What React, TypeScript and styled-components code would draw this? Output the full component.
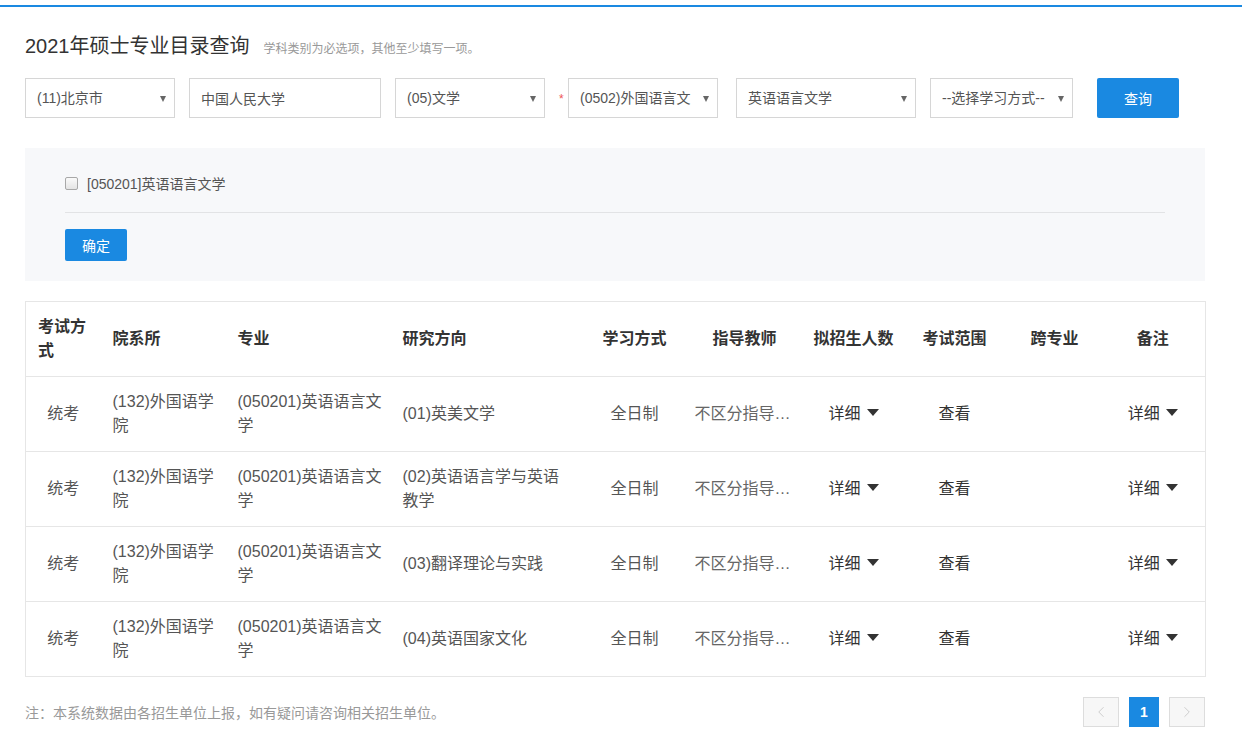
import styled, { createGlobalStyle } from "styled-components";
import { ChevronLeft, ChevronRight } from "lucide-react";

const GlobalStyle = createGlobalStyle`
  * { box-sizing: border-box; }
  body {
    margin: 0;
    background: #fff;
    font-family: "Liberation Sans", "Noto Sans CJK SC", sans-serif;
    color: #555;
  }
`;

const BLUE = "#1a89e1";

const Page = styled.div`
  padding-top: 5px;
`;
const TopLine = styled.div`
  height: 2px;
  background: ${BLUE};
`;
const Container = styled.div`
  width: 1180px;
  margin-left: 25px;
`;
const TitleRow = styled.div`
  display: flex;
  align-items: baseline;
  margin-top: 26px;
  height: 26px;
`;
const Title = styled.h1`
  margin: 0;
  font-size: 20px;
  font-weight: normal;
  color: #333;
  line-height: 26px;
`;
const Hint = styled.span`
  margin-left: 14px;
  font-size: 12px;
  color: #999;
`;
const FilterRow = styled.div`
  display: flex;
  align-items: center;
  gap: 14px;
  margin-top: 19px;
  height: 40px;
`;
const Select = styled.div<{ $w: number }>`
  position: relative;
  width: ${(p) => p.$w}px;
  height: 40px;
  border: 1px solid #d6d6d6;
  padding: 0 24px 0 11px;
  display: flex;
  align-items: center;
  font-size: 14px;
  color: #555;
  &::after {
    content: "";
    position: absolute;
    right: 8px;
    top: 17px;
    border-left: 3.5px solid transparent;
    border-right: 3.5px solid transparent;
    border-top: 6px solid #666;
  }
`;
/* the option text wraps whole characters out of sight, like a native select */
const SelectText = styled.span`
  display: block;
  height: 20px;
  line-height: 20px;
  overflow: hidden;
  word-break: break-all;
`;
const Input = styled.div<{ $w: number }>`
  width: ${(p) => p.$w}px;
  height: 40px;
  border: 1px solid #d6d6d6;
  padding: 0 11px;
  display: flex;
  align-items: center;
  font-size: 14px;
  color: #555;
`;
const Required = styled.div`
  display: flex;
  align-items: center;
  margin-right: 4px;
`;
const Star = styled.span`
  width: 9px;
  color: #e55;
  font-size: 12px;
  margin-top: 2px;
`;
const Button = styled.button<{ $w: number; $h: number }>`
  width: ${(p) => p.$w}px;
  height: ${(p) => p.$h}px;
  background: ${BLUE};
  color: #fff;
  border: 0;
  border-radius: 2px;
  font-family: inherit;
  font-size: 14px;
  cursor: pointer;
`;
const SearchButton = styled(Button)`
  margin-left: 10px;
`;
const Panel = styled.div`
  margin-top: 30px;
  background: #f7f8fa;
  padding: 20px 40px 20px;
`;
const CheckRow = styled.div`
  display: flex;
  align-items: center;
  height: 32px;
  font-size: 14px;
  color: #555;
  margin-top: -1px;
`;
const CheckBox = styled.span`
  width: 13px;
  height: 13px;
  border: 1px solid #a8a8a8;
  border-radius: 2px;
  background: linear-gradient(#fafafa, #e4e4e4);
  margin-right: 9px;
`;
const Divider = styled.div`
  height: 1px;
  background: #e2e3e5;
  margin: 13px 0 16px;
`;
const Table = styled.table`
  margin-top: 20px;
  width: 1180px;
  table-layout: fixed;
  border-collapse: collapse;
  border: 1px solid #e6e6e6;
  font-size: 16px;
  line-height: 24px;

  th:nth-child(4),
  td:nth-child(4) {
    padding-right: 20px;
  }
`;
const Th = styled.th<{ $center?: boolean }>`
  height: 75px;
  padding: ${(p) => (p.$center ? "0 6px" : "0 6px 0 12px")};
  text-align: ${(p) => (p.$center ? "center" : "left")};
  font-weight: bold;
  color: #333;
  border-bottom: 1px solid #e6e6e6;
`;
const Td = styled.td<{ $center?: boolean; $dark?: boolean }>`
  height: 75px;
  padding: ${(p) => (p.$center ? "0 6px" : "0 6px 0 12px")};
  text-align: ${(p) => (p.$center ? "center" : "left")};
  color: ${(p) => (p.$dark ? "#333" : "#555")};
  border-bottom: 1px solid #e6e6e6;
`;
const Ellipsis = styled(Td)`
  white-space: nowrap;
  overflow: hidden;
  text-overflow: ellipsis;
  color: #666;
`;
const Caret = styled.span`
  display: inline-block;
  margin-left: 6px;
  vertical-align: middle;
  border-left: 6px solid transparent;
  border-right: 6px solid transparent;
  border-top: 7px solid #333;
  position: relative;
  top: -2px;
`;
const Footer = styled.div`
  display: flex;
  align-items: center;
  justify-content: space-between;
  margin-top: 20px;
  height: 30px;
`;
const Note = styled.span`
  font-size: 14px;
  color: #999;
`;
const Pager = styled.div`
  display: flex;
  gap: 10px;
`;
const PageArrow = styled.span`
  width: 36px;
  height: 30px;
  border: 1px solid #ddd;
  background: #f7f7f7;
  display: flex;
  align-items: center;
  justify-content: center;
  color: #c8c8c8;
`;
const PageNum = styled.span`
  width: 30px;
  height: 30px;
  background: ${BLUE};
  color: #fff;
  font-size: 14px;
  font-weight: bold;
  display: flex;
  align-items: center;
  justify-content: center;
`;

const widths = [75, 125, 165, 196, 96, 124, 94, 108, 92, 105];
const rows = [
  "(01)英美文学",
  "(02)英语语言学与英语教学",
  "(03)翻译理论与实践",
  "(04)英语国家文化",
];

export default function App() {
  return (
    <Page>
      <GlobalStyle />
      <TopLine />
      <Container>
        <TitleRow>
          <Title>2021年硕士专业目录查询</Title>
          <Hint>学科类别为必选项，其他至少填写一项。</Hint>
        </TitleRow>
        <FilterRow>
          <Select $w={150}>
            <SelectText>(11)北京市</SelectText>
          </Select>
          <Input $w={192}>中国人民大学</Input>
          <Select $w={150}>
            <SelectText>(05)文学</SelectText>
          </Select>
          <Required>
            <Star>*</Star>
            <Select $w={150}>
              <SelectText>(0502)外国语言文学</SelectText>
            </Select>
          </Required>
          <Select $w={180}>
            <SelectText>英语语言文学</SelectText>
          </Select>
          <Select $w={143}>
            <SelectText>--选择学习方式--</SelectText>
          </Select>
          <SearchButton $w={82} $h={40}>查询</SearchButton>
        </FilterRow>
        <Panel>
          <CheckRow>
            <CheckBox />
            [050201]英语语言文学
          </CheckRow>
          <Divider />
          <Button $w={62} $h={32}>确定</Button>
        </Panel>
        <Table>
          <colgroup>
            {widths.map((w, i) => (
              <col key={i} style={{ width: w }} />
            ))}
          </colgroup>
          <thead>
            <tr>
              <Th>考试方式</Th>
              <Th>院系所</Th>
              <Th>专业</Th>
              <Th>研究方向</Th>
              <Th $center>学习方式</Th>
              <Th $center>指导教师</Th>
              <Th $center>拟招生人数</Th>
              <Th $center>考试范围</Th>
              <Th $center>跨专业</Th>
              <Th $center>备注</Th>
            </tr>
          </thead>
          <tbody>
            {rows.map((r) => (
              <tr key={r}>
                <Td $center>统考</Td>
                <Td>(132)外国语学院</Td>
                <Td>(050201)英语语言文学</Td>
                <Td>{r}</Td>
                <Td $center>全日制</Td>
                <Ellipsis>不区分指导教师</Ellipsis>
                <Td $center $dark>
                  详细<Caret />
                </Td>
                <Td $center $dark>查看</Td>
                <Td $center></Td>
                <Td $center $dark>
                  详细<Caret />
                </Td>
              </tr>
            ))}
          </tbody>
        </Table>
        <Footer>
          <Note>注：本系统数据由各招生单位上报，如有疑问请咨询相关招生单位。</Note>
          <Pager>
            <PageArrow>
              <ChevronLeft size={18} strokeWidth={1.2} />
            </PageArrow>
            <PageNum>1</PageNum>
            <PageArrow>
              <ChevronRight size={18} strokeWidth={1.2} />
            </PageArrow>
          </Pager>
        </Footer>
      </Container>
    </Page>
  );
}
